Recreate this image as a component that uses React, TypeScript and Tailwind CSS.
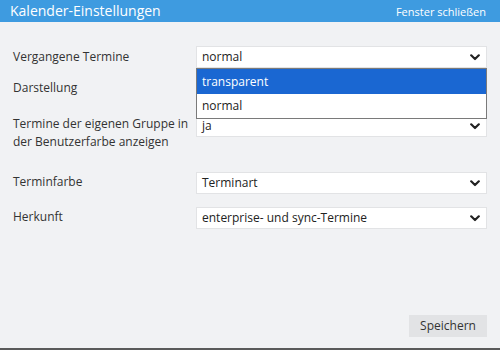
import React from 'react';

const Chevron: React.FC = () => (
  <svg width="10" height="7" viewBox="0 0 10 7" className="shrink-0">
    <polyline points="1.2,1.3 5,5 8.8,1.3" fill="none" stroke="#222" strokeWidth="2.2" strokeLinecap="round" strokeLinejoin="round" />
  </svg>
);

interface SelectBoxProps {
  value: string;
}

const SelectBox: React.FC<SelectBoxProps> = ({ value }) => (
  <div className="w-[291px] h-[22px] bg-white border border-[#e2e3e5] flex items-center justify-between pl-[5px] pr-[6px] text-[12px] text-[#222]">
    <span>{value}</span>
    <Chevron />
  </div>
);

const App: React.FC = () => {
  return (
    <div
      className="w-[500px] h-[350px] bg-[#f1f2f4] flex flex-col border-b-2 border-[#5a5a5a] overflow-hidden"
      style={{ fontFamily: '"Open Sans", "Noto Sans", sans-serif' }}
    >
      {/* Header */}
      <div className="h-[22px] bg-[#3e9be0] flex items-center justify-between pl-[10px] pr-[14px] shrink-0">
        <span className="text-white text-[14px] leading-none">Kalender-Einstellungen</span>
        <span className="text-white text-[11px] leading-none">Fenster schließen</span>
      </div>

      {/* Form */}
      <div className="flex-1 flex flex-col pt-[24px] pl-[13px] text-[12px] text-[#333]">
        <div className="flex items-center h-[22px] relative">
          <div className="w-[183px]">Vergangene Termine</div>
          <SelectBox value="normal" />

          {/* Open dropdown */}
          <div className="absolute left-[183px] top-[22px] w-[291px] bg-white border border-[#7a7a7a] z-10 text-[12px]">
            <div className="h-[25px] bg-[#1a67d2] text-white flex items-center pl-[5px]">transparent</div>
            <div className="h-[24px] text-[#222] flex items-center pl-[5px]">normal</div>
          </div>
        </div>

        <div className="flex items-center h-[22px] mt-[9px]">
          <div className="w-[183px]">Darstellung</div>
          <SelectBox value="" />
        </div>

        <div className="flex items-start mt-[16px]">
          <div className="w-[183px] leading-[18px]">
            Termine der eigenen Gruppe in der Benutzerfarbe anzeigen
          </div>
          <SelectBox value="ja" />
        </div>

        <div className="flex items-center h-[22px] mt-[21px]">
          <div className="w-[183px] pb-[2px]">Terminfarbe</div>
          <SelectBox value="Terminart" />
        </div>

        <div className="flex items-center h-[22px] mt-[13px]">
          <div className="w-[183px] pb-[2px]">Herkunft</div>
          <SelectBox value="enterprise- und sync-Termine" />
        </div>

        <div className="flex-1" />

        <div className="flex justify-end pr-[13px] pb-[11px]">
          <button className="w-[78px] h-[22px] bg-[#e2e3e5] text-[12px] text-[#333]">Speichern</button>
        </div>
      </div>
    </div>
  );
};

export default App;
